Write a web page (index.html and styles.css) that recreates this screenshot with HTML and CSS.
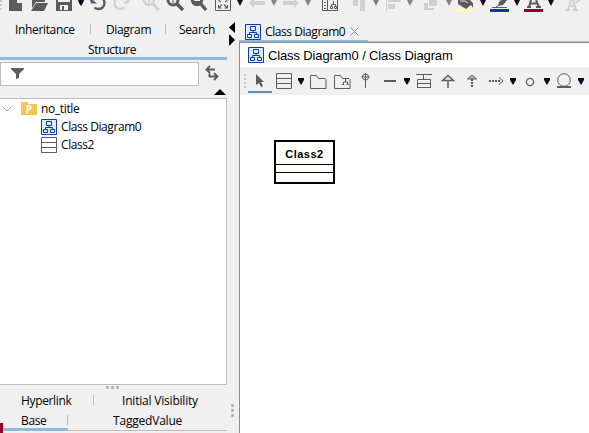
FILE: index.html
```
<!DOCTYPE html>
<html lang="en">
<head>
<meta charset="utf-8">
<title>Class Diagram0</title>
<link rel="stylesheet" href="styles.css">
</head>
<body>
<svg class="defs" width="0" height="0" aria-hidden="true">
  <symbol id="diagram" viewBox="0 0 16 16">
    <path d="M.5.5h15v15H.5z" fill="#dfeaff" stroke="#0b3fa5"/>
    <path d="M5.500 2.500h5v4h-5zM2.500 10.500h4v3h-4zM9.500 10.500h4v3h-4zM8 6.500v2M4.500 10.500v-2h7v2" fill="none" stroke="#0b3fa5"/>
  </symbol>
</svg>
<div class="app">
  <div class="topbar">
    <svg width="5" height="13" viewBox="0 0 5 13"><path d="M0 0h2v2H0zM0 4h2v2H0zM0 8h2v2H0z" fill="#c8c8c8"/></svg>
    <svg width="22" height="13" viewBox="5 0 22 13"><path d="M9 0h8v3h5v8H9z" fill="#5c5a5a"/></svg>
    <svg width="25" height="13" viewBox="27 0 25 13"><path d="M32 0h13v2H36l-4 6zM36 3h12l-4 8H31z" fill="#5c5a5a"/></svg>
    <svg width="23" height="13" viewBox="52 0 23 13"><path d="M56 0h16v11H56z" fill="#5c5a5a"/><path d="M58 0h12v2H58zM60 5h8v5h-8z" fill="#f0f0f0"/><path d="M62 6h2v4h-2z" fill="#5c5a5a"/></svg>
    <svg width="11" height="13" viewBox="75 0 11 13"><path d="M78 0h6l-1 3-2 3-2-3z" fill="#170020"/></svg>
    <svg width="24" height="13" viewBox="86 0 24 13"><path d="M90 0l1 3.500h6l-4-3.500z" fill="#5c5a5a"/><path d="M103 -1c3 4 1 10-4.500 10-2 0-3-.5-4-1.500" fill="none" stroke="#5c5a5a" stroke-width="2.300"/></svg>
    <svg width="24" height="13" viewBox="110 0 24 13"><path d="M130 0l-1 3.500h-6l4-3.500z" fill="#cdd1cf"/><path d="M116 -1c-3 4-1 10 4.500 10 2 0 3-.5 4-1.500" fill="none" stroke="#cdd1cf" stroke-width="2.300"/></svg>
    <svg width="29" height="13" viewBox="134 0 29 13"><circle cx="149" cy="0" r="5" fill="none" stroke="#cdd1cf" stroke-width="2.500"/><path d="M153 4l6 6" stroke="#cdd1cf" stroke-width="3"/><path d="M149 0v3" stroke="#cdd1cf" stroke-width="2"/></svg>
    <svg width="24" height="13" viewBox="163 0 24 13"><circle cx="173" cy="0" r="5" fill="none" stroke="#5c5a5a" stroke-width="3"/><path d="M177 4l6 6" stroke="#5c5a5a" stroke-width="3.500"/><path d="M173 0v3" stroke="#5c5a5a"/></svg>
    <svg width="24" height="13" viewBox="187 0 24 13"><circle cx="197" cy="0" r="5" fill="#5c5a5a" stroke="#5c5a5a" stroke-width="2.500"/><path d="M201 4l5 6" stroke="#5c5a5a" stroke-width="3.500"/><path d="M194 .5h6" stroke="#f0f0f0"/></svg>
    <svg width="23" height="13" viewBox="211 0 23 13"><path d="M215.500 0v10.500h15V0" fill="none" stroke="#5c5a5a"/><path d="M218.500 5v3h3M227.500 5v3h-3M219 7.500l3-3M227 7.500l-3-3M219 0v1l2 1M227 0v1l-2 1" fill="none" stroke="#5c5a5a" stroke-width="1.100"/></svg>
    <svg width="12" height="13" viewBox="234 0 12 13"><path d="M237 0h6l-3 6z" fill="#170020"/></svg>
    <svg width="22" height="13" viewBox="246 0 22 13"><path d="M249 3l5-5v3h11v4h-11v3z" fill="#cdd1cf"/></svg>
    <svg width="12" height="13" viewBox="268 0 12 13"><path d="M271 0h6l-3 6z" fill="#8b8079"/></svg>
    <svg width="22" height="13" viewBox="280 0 22 13"><path d="M299 3l-5-5v3h-11v4h11v3z" fill="#cdd1cf"/></svg>
    <svg width="16" height="13" viewBox="302 0 16 13"><path d="M305 0h6l-3 6z" fill="#8b8079"/></svg>
    <svg width="26" height="13" viewBox="318 0 26 13"><path d="M322.500 0v10.500h15V0M327.500 0v10M324 2.500h2M324 5.500h2M324 8.500h2M330.500 6.500h2v2h-2zM334.500 6.500h2v2h-2zM331.500 6V4.500h4V6M333.500 4V1" fill="none" stroke="#5c5a5a"/></svg>
    <svg width="26" height="13" viewBox="344 0 26 13"><path d="M353 0h5v6h-5zM360 0h5v11h-5z" fill="#cdd1cf"/></svg>
    <svg width="14" height="13" viewBox="370 0 14 13"><path d="M373 0h6l-3 6z" fill="#8b8079"/></svg>
    <svg width="21" height="13" viewBox="384 0 21 13"><path d="M386 0h1v11h-1zM388 0h13v2h-13zM388 4h7v5h-7z" fill="#cdd1cf"/></svg>
    <svg width="14" height="13" viewBox="405 0 14 13"><path d="M407 0h6l-3 6z" fill="#8b8079"/></svg>
    <svg width="24" height="13" viewBox="419 0 24 13"><path d="M429 0h8v6h-8zM424 3h4v5h6v2h-10z" fill="#cdd1cf"/></svg>
    <svg width="12" height="13" viewBox="443 0 12 13"><path d="M446 0h6l-3 6z" fill="#8b8079"/></svg>
    <svg width="23" height="13" viewBox="455 0 23 13"><path d="M456 9h19v3h-19z" fill="#fdfbb0"/><path d="M458 0h12l3 3v5l-2-3-5 4-8-5z" fill="#5c5a5a"/><path d="M460 1h5l3 2" fill="none" stroke="#ddd"/></svg>
    <svg width="10" height="13" viewBox="478 0 10 13"><path d="M480 0h6l-3 6z" fill="#170020"/></svg>
    <svg width="24" height="13" viewBox="488 0 24 13"><path d="M499 2l3-3 6 0-5 6-5 1z" fill="#5c5a5a"/><path d="M492 7.500h15M496 7l3-2" fill="none" stroke="#5c5a5a"/><path d="M490 9h19v3h-19z" fill="#0738a6"/></svg>
    <svg width="10" height="13" viewBox="512 0 10 13"><path d="M514 0h6l-3 6z" fill="#170020"/></svg>
    <svg width="24" height="13" viewBox="522 0 24 13"><path d="M531 0l-2 7M536 0l3 7M527 7h4M536 7h5M530 3.500h8" fill="none" stroke="#5c5a5a" stroke-width="2"/><path d="M524 9h19v3h-19z" fill="#96002c"/></svg>
    <svg width="13" height="13" viewBox="546 0 13 13"><path d="M548 0h6l-3 6z" fill="#170020"/></svg>
    <svg width="30" height="13" viewBox="559 0 30 13"><path d="M571 0l-3 10M573 0l3 10M565 10h5M573 10h5M569 6h6M576 3c0-2 3-2 4-3" fill="none" stroke="#cdd1cf" stroke-width="2"/></svg>
  </div>
  <div class="main">
    <aside class="side">
      <nav class="tabs">
        <div class="tabrow"><span class="tab inh"><b class="t">Inheritance</b></span><span class="tab dia"><b class="t">Diagram</b></span><span class="tab sea"><b class="t">Search</b></span></div>
        <div class="tabrow active"><b class="t">Structure</b></div>
      </nav>
      <div class="filter">
        <div class="field"><svg width="13" height="12" viewBox="0 0 13 12"><path d="M0 0h13v1L8 6v4l-3 1V6L0 1z" fill="#5c5a5a"/></svg></div>
        <svg class="swap" width="14" height="17" viewBox="0 0 14 17"><path d="M5 1L1.500 4.500 5 8M2 4.500h8M9 8l3.500 3.500L9 15M12 11.500H4M4.500 12V8.500" fill="none" stroke="#5c5a5a" stroke-width="1.900"/></svg>
      </div>
      <div class="collapse"><svg width="12" height="6" viewBox="0 0 12 6"><path d="M6 0l6 6H0z"/></svg></div>
      <div class="tree">
        <div class="node root">
          <svg width="10" height="6" viewBox="0 0 10 6"><path d="M.5.5L5 5 9.500.500" fill="none" stroke="#a0a0a0"/></svg>
          <span class="folder">P</span>
          <b class="t">no_title</b>
        </div>
        <div class="node"><svg width="16" height="16"><use href="#diagram"/></svg><b class="t tight">Class Diagram0</b></div>
        <div class="node"><svg width="16" height="16"><path d="M.5.500h15v15H.5zM0 5.500h16M0 10.500h16" fill="#fff" stroke="#5c5a5a"/></svg><b class="t tight">Class2</b></div>
      </div>
      <div class="hgrip"><i></i><i></i><i></i></div>
      <nav class="props">
        <div class="proprow"><span class="prop hyp"><b class="t">Hyperlink</b></span><b class="t wide">Initial Visibility</b></div>
        <div class="proprow second"><span class="prop base"><b class="t">Base</b></span><b class="t wide">TaggedValue</b></div>
        <div class="underline"></div>
        <div class="mark"></div>
      </nav>
    </aside>
    <div class="divider">
      <svg width="7" height="24" viewBox="0 0 7 24"><path d="M6 0v11L0 5.500zM0 12v12l6-6z"/></svg>
      <div class="vgrip"><i></i><i></i><i></i></div>
    </div>
    <section class="editor">
      <div class="edtabs"><div class="edtab"><svg width="16" height="16"><use href="#diagram"/></svg><b class="t tight">Class Diagram0</b><svg class="close" width="9" height="9" viewBox="0 0 9 9"><path d="M.5.500l8 8M8.500.500l-8 8" stroke="#8a8a8a"/></svg></div></div>
      <div class="body">
        <div class="crumb"><svg width="16" height="16"><use href="#diagram"/></svg><b class="t">Class Diagram0 / Class Diagram</b></div>
        <div class="tools">
          <svg width="8" height="28" viewBox="240 67 8 28"><path d="M244 74h2v2h-2zM244 78h2v2h-2zM244 82h2v2h-2zM244 86h2v2h-2z" fill="#c8c8c8"/></svg>
          <svg width="24" height="28" viewBox="248 67 24 28"><path d="M256 74l8 8h-3l2 4-2 1-2-4-3 2z" fill="#5c5a5a"/><path d="M248 91h24v2h-24z" fill="#5a92c2"/></svg>
          <svg width="36" height="28" viewBox="272 67 36 28"><path d="M276.500 73.500h15v15h-15zM276 78.500h16M276 83.500h16" fill="none" stroke="#5c5a5a"/><path d="M298 78h6v2l-3 5-3-5z" fill="#170020"/></svg>
          <svg width="23" height="28" viewBox="308 67 23 28"><path d="M310.500 88.500v-13h6l2 3h6.500l1 1v9z" fill="none" stroke="#5c5a5a"/></svg>
          <svg width="24" height="28" viewBox="331 67 24 28"><path d="M334.500 88.500v-13h6l2 3h6.500l1 1v9zM345.500 79v3M343.500 85v-3h4v3M342 84.500h2M346.500 84.500h2" fill="none" stroke="#5c5a5a"/></svg>
          <svg width="22" height="28" viewBox="355 67 22 28"><circle cx="365.500" cy="77" r="3" fill="none" stroke="#5c5a5a"/><path d="M361.500 77h8M365.500 73v15" fill="none" stroke="#5c5a5a"/></svg>
          <svg width="35" height="28" viewBox="377 67 35 28"><path d="M384 80h12v2h-12z" fill="#5c5a5a"/><path d="M404 78h6v2l-3 5-3-5z" fill="#170020"/></svg>
          <svg width="24" height="28" viewBox="412 67 24 28"><path d="M416 74.500h16M423.500 74v5M417.500 79.500h13v8h-13zM417 83.500h14" fill="none" stroke="#5c5a5a"/></svg>
          <svg width="24" height="28" viewBox="436 67 24 28"><path d="M442.500 80.500l5.500-5 5.500 5zM448 80v8" fill="none" stroke="#5c5a5a" stroke-width="1.500"/></svg>
          <svg width="24" height="28" viewBox="460 67 24 28"><path d="M467.500 79l4.500-4 4.500 4z" fill="#bbb" stroke="#5c5a5a"/><path d="M472 79v9" stroke="#5c5a5a" stroke-width="2" stroke-dasharray="2 1"/></svg>
          <svg width="36" height="28" viewBox="484 67 36 28"><path d="M489 81h12" stroke="#5c5a5a" stroke-width="2" stroke-dasharray="2 1"/><path d="M499 77.500l4 3.500-4 3.500" fill="none" stroke="#5c5a5a"/><path d="M510 78h6v2l-3 5-3-5z" fill="#170020"/></svg>
          <svg width="34" height="28" viewBox="520 67 34 28"><circle cx="530" cy="82" r="3.600" fill="none" stroke="#5c5a5a" stroke-width="1.300"/><path d="M544 78h6v2l-3 5-3-5z" fill="#170020"/></svg>
          <svg width="35" height="28" viewBox="554 67 35 28"><circle cx="564" cy="80" r="6.300" fill="none" stroke="#5c5a5a"/><path d="M557 86h14v2h-14z" fill="#5c5a5a"/><path d="M578 78h6v2l-3 5-3-5z" fill="#170020"/></svg>
        </div>
        <div class="canvas"><div class="uml"><div class="name">Class2</div><div class="attrs"></div><div class="ops"></div></div></div>
      </div>
    </section>
  </div>
</div>
</body>
</html>
```
FILE: styles.css
```
* { box-sizing: border-box; }
body { margin: 0; font: 12px/18px "Open Sans", sans-serif; color: #000; background: #f0f0f0; overflow: hidden; }
svg { display: block; flex: none; }
.defs { position: absolute; }
.app { width: 589px; height: 433px; display: flex; flex-direction: column; }
.topbar { display: flex; height: 13px; }
.main { display: flex; height: 420px; }
.t { font-weight: 400; white-space: nowrap; flex: none; letter-spacing: -0.35px; }
.tight { letter-spacing: -0.43px; }
.wide { letter-spacing: -0.2px; }
.side { width: 227px; display: flex; flex-direction: column; }
.tabs { height: 47px; padding-top: 8px; border-bottom: 3px solid #91b9da; }
.tabrow { display: flex; height: 18px; }
.tab { display: flex; align-items: center; }
.inh { width: 91px; padding-left: 15px; }
.dia { width: 75px; padding-left: 15px; }
.sea { padding-left: 13px; }
.inh, .dia { background: linear-gradient(#bcbcbc, #bcbcbc) right 3px / 1px 10px no-repeat; }
.active { padding-left: 88px; margin-top: 2px; }
.active .t { letter-spacing: -0.45px; }
.filter { display: flex; height: 28px; padding-top: 2px; }
.field { width: 199px; height: 24px; background: #fff; border: 1px solid #bcbcbc; padding: 5px 0 0 10px; }
.swap { margin: 3px 0 0 6px; }
.collapse { height: 10px; padding: 1px 0 0 214px; }
.tree { height: 287px; background: #fff; border: 1px solid #bcbcbc; border-left: 0; }
.node { display: flex; align-items: center; height: 18px; padding-left: 41px; gap: 4px; }
.root { padding-left: 2px; height: 19px; gap: 0; }
.folder { width: 16px; height: 13px; margin: 0 4px 0 9px; background: linear-gradient(#f3c64e, #f3c64e) 0 0 / 7px 2px no-repeat, linear-gradient(#f3c64e, #f3c64e) 0 2px / 16px 11px no-repeat; color: #fff; font: bold 10px/15px "Open Sans", sans-serif; text-align: center; }
.hgrip { display: flex; gap: 2px; height: 7px; padding: 1px 0 0 106px; }
.hgrip i, .vgrip i { width: 3px; height: 3px; border-radius: 1px; background: #b4b4b4; }
.props { position: relative; height: 41px; }
.proprow { display: flex; height: 18px; }
.second { margin-top: 2px; }
.prop { padding-left: 21px; background: linear-gradient(#bcbcbc, #bcbcbc) right 3px / 1px 10px no-repeat; }
.hyp { width: 94px; margin-right: 28px; }
.base { width: 68px; margin-right: 45px; height: 15px; }
.underline { height: 3px; margin-top: -2px; background: linear-gradient(#91b9da, #91b9da) 0 0 / 68px 3px no-repeat, linear-gradient(#bcbcbc, #bcbcbc) 0 2px / 100% 1px no-repeat; }
.mark { position: absolute; left: 0; bottom: 0; width: 3px; height: 10px; background: #8f0029; }
.divider { width: 12px; padding: 9px 0 0 2px; }
.vgrip { display: flex; flex-direction: column; gap: 2px; margin-top: 358px; padding-left: 2px; }
.editor { width: 350px; display: flex; flex-direction: column; }
.edtabs { height: 29px; background: linear-gradient(#bcbcbc, #bcbcbc) 0 28px / 100% 1px no-repeat; }
.edtab { display: flex; align-items: center; width: 129px; height: 29px; padding: 10px 0 0 6px; gap: 4px; border-bottom: 2px solid #91b9da; }
.edtab .t { padding-top: 1px; }
.close { margin-left: 1px; }
.body { height: 391px; background: #fff; border-top: 1px solid #8e8e8e; border-left: 1px solid #8e8e8e; display: flex; flex-direction: column; }
.crumb { display: flex; align-items: center; height: 24px; padding-left: 8px; gap: 4px; font: 13px/18px "Liberation Sans", sans-serif; }
.crumb .t { letter-spacing: -0.13px; padding-top: 2px; }
.tools { display: flex; height: 28px; background: #f0f0f0; overflow: hidden; }
.canvas { padding: 45px 0 0 34px; }
.uml { width: 61px; height: 44px; border: 2px solid #000; background: #fffffc; font: bold 11px/24px "Liberation Sans", sans-serif; text-align: center; }
.name { height: 22px; letter-spacing: .5px; }
.attrs { height: 8px; border-top: 1px solid #000; }
.ops { height: 10px; border-top: 1px solid #000; }
```
